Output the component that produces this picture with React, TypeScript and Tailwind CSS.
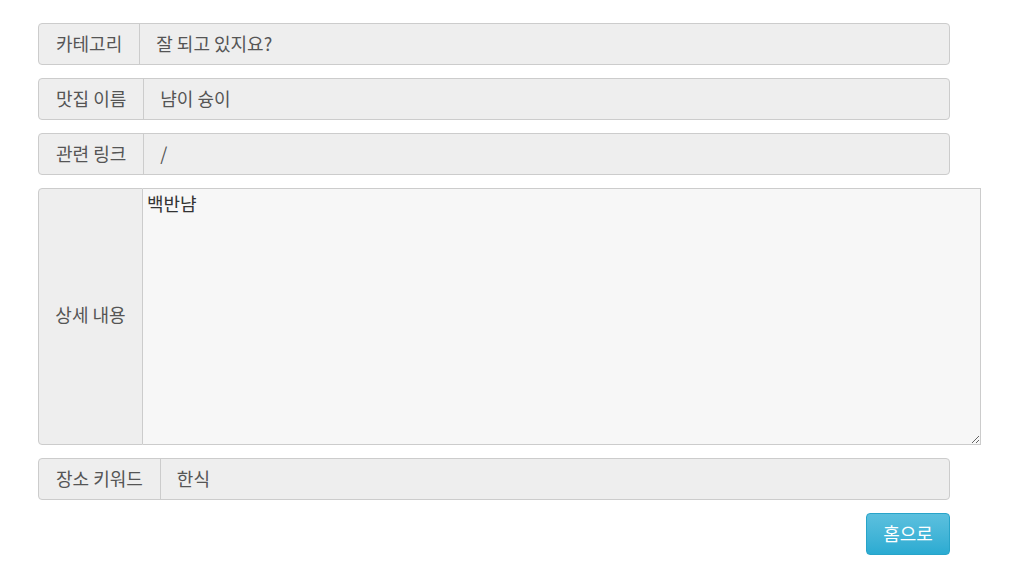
import React from 'react';

const font = { fontFamily: '"Noto Sans CJK KR", "Noto Sans", sans-serif' };

function Row({ label, value }: { label: string; value: string }) {
  return (
    <div className="flex h-[42px] w-[912px] rounded-[4px] border border-[#ccc] bg-[#eee] text-[18px] text-[#555]">
      <div className="flex items-center border-r border-[#ccc] px-[17px] pb-[2px] whitespace-nowrap">{label}</div>
      <div className="flex flex-1 items-center px-[16px] pb-[2px]">{value}</div>
    </div>
  );
}

export default function App() {
  return (
    <div className="min-h-screen bg-white pl-[38px] pt-[23px]" style={font}>
      <div className="flex flex-col gap-[13px]">
        <Row label="카테고리" value="잘 되고 있지요?" />
        <Row label="맛집 이름" value="냠이 슝이" />
        <Row label="관련 링크" value="/" />
        <div className="flex h-[257px] w-[943px] text-[18px]">
          <div className="flex w-[105px] items-center justify-center rounded-l-[4px] border border-[#ccc] bg-[#eee] pb-[4px] text-[#555]">
            상세 내용
          </div>
          <textarea
            readOnly
            defaultValue="백반냠"
            className="flex-1 resize-y border border-l-0 border-[#ccc] bg-[#f7f7f7] px-[4px] py-[1px] leading-[26px] text-[#333] outline-none"
            style={font}
          />
        </div>
        <Row label="장소 키워드" value="한식" />
        <div className="flex w-[912px] justify-end">
          <button className="h-[42px] w-[84px] rounded-[4px] border border-[#28a4c9] bg-gradient-to-b from-[#5bc0de] to-[#2aabd2] pb-[2px] text-[18px] text-white">
            홈으로
          </button>
        </div>
      </div>
    </div>
  );
}
